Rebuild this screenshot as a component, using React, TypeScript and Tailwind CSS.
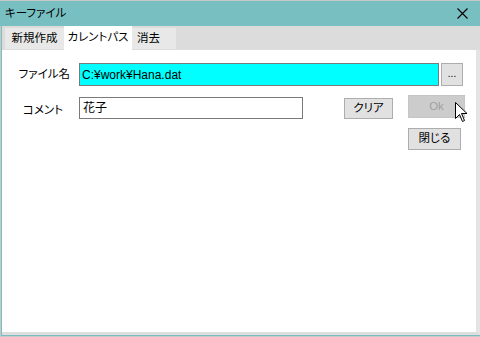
import React from "react";

const font = {
  fontFamily: '"Liberation Sans", "Noto Sans CJK JP", sans-serif',
  fontFeatureSettings: '"palt"',
};

export default function App() {
  return (
    <div
      className="w-[480px] h-[337px] bg-[#c8c8c8] flex flex-col overflow-hidden text-[11.5px] text-black whitespace-nowrap"
      style={font}
    >
      <div className="mt-[1px] h-[25px] bg-[#78bfc2] flex items-center justify-between pl-[5px] pr-[12px] shrink-0">
        <span className="leading-none">キーファイル</span>
        <svg width="11" height="11" viewBox="0 0 11 11">
          <path d="M0.5 0.5 L10.5 10.5 M10.5 0.5 L0.5 10.5" stroke="#000" strokeWidth="1.1" />
        </svg>
      </div>
      <div className="flex-1 flex flex-col border-l border-l-[#78bfc2] ml-[1px] bg-white">
        <div className="h-[24px] bg-[#dcdcdc] flex items-end pl-[3px] shrink-0">
          <div className="h-[21px] w-[59px] mb-[1px] bg-[#e8e8e8] flex items-center justify-center">新規作成</div>
          <div className="h-[24px] w-[68px] bg-white flex items-center justify-center">カレントパス</div>
          <div className="h-[21px] w-[44px] mb-[1px] bg-[#e8e8e8] flex items-center pl-[5px]">消去</div>
        </div>
        <div className="flex-1 flex flex-col bg-white border-r-[4px] border-r-[#e4e4e4] border-b-[3px] border-b-[#dedede] relative">
          <div className="flex items-center mt-[13px] h-[23px]">
            <div className="w-[68px] text-right pt-[1px]">ファイル名</div>
            <div className="ml-[9px] w-[360px] h-[23px] bg-[#00ffff] border border-[#7a7a7a] flex items-center pl-[2px] text-[12px]">
              C:¥work¥Hana.dat
            </div>
            <div className="ml-[2px] w-[22px] h-[23px] bg-[#e1e1e1] border border-[#adadad] flex items-center justify-center text-[10px] pb-[3px]">
              ...
            </div>
          </div>
          <div className="flex mt-[11px]">
            <div className="w-[61px] text-right pt-[5px]">コメント</div>
            <div className="ml-[16px] w-[224px] h-[22px] border border-[#7a7a7a] flex items-center pl-[3px] text-[12px]">
              花子
            </div>
            <div className="ml-[41px] mt-[1px] w-[49px] h-[21px] bg-[#e1e1e1] border border-[#adadad] flex items-center justify-center">
              クリア
            </div>
            <div className="ml-[15px] flex flex-col">
              <div className="-mt-[2px] w-[57px] h-[23px] bg-[#cccccc] border border-dotted border-[#bfbfbf] flex items-center justify-center text-[#a0a0a0]">
                Ok
              </div>
              <div className="mt-[10px] w-[53px] h-[22px] bg-[#e1e1e1] border border-[#adadad] flex items-center justify-center">
                閉じる
              </div>
            </div>
          </div>
          <svg className="absolute left-[453px] top-[52px]" width="13" height="21" viewBox="0 0 13 21">
            <path
              d="M0.5 0.5 L0.5 16.5 L4.5 12.5 L7.5 19.5 L9.5 18.5 L6.5 11.5 L12 11.5 Z"
              fill="#fff"
              stroke="#000"
              strokeWidth="1"
            />
          </svg>
        </div>
      </div>
      <div className="h-[1px] bg-[#78bfc2] ml-[1px]" />
      <div className="h-[1px] bg-[#c8c8c8]" />
    </div>
  );
}
